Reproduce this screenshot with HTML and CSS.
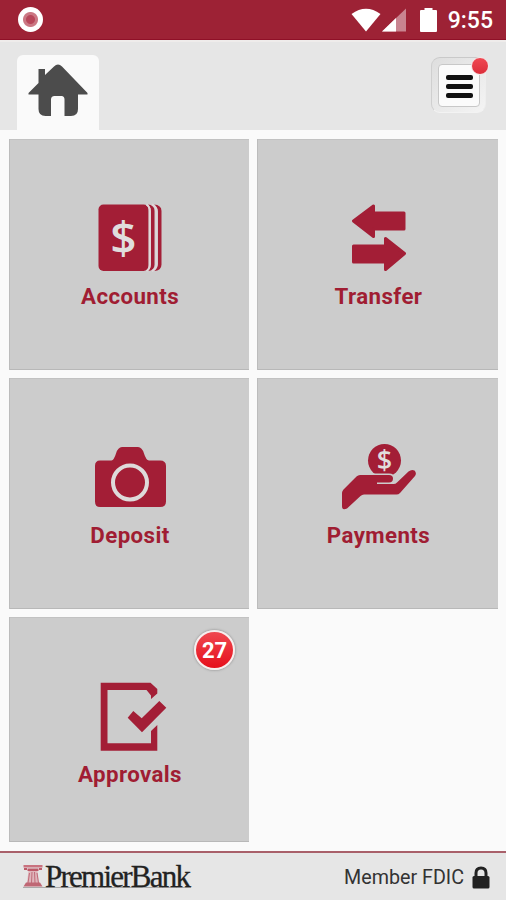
FILE: index.html
```
<!DOCTYPE html>
<html lang="en">
<head>
    <meta charset="UTF-8">
    <meta name="viewport" content="width=device-width, initial-scale=1.0">
    <title>PremierBank Mobile</title>
    <link rel="stylesheet" href="styles.css">
</head>
<body>
    <div class="status-bar">
        <span class="record"></span>
        <div class="status-icons">
            <svg class="wifi" width="30" height="24" viewBox="0 0 30 24"><path d="M.5 6Q15-4.500 29.500 6L15 23.500z" fill="#fff"/></svg>
            <svg class="signal" width="24" height="24" viewBox="0 0 24 24">
                <path d="M0 23.500L24 .5v23z" fill="#c98490"/>
                <path d="M0 23.500L14 10v13.500z" fill="#fff"/>
            </svg>
            <svg class="battery" width="17" height="24" viewBox="0 0 17 24"><path d="M4.500 0h8v2H16q1 0 1 1v20q0 1-1 1H1q-1 0-1-1V3q0-1 1-1h3.500z" fill="#fff"/></svg>
            <span class="time">9:55</span>
        </div>
    </div>

    <header>
        <a class="home-tab">
            <svg width="60" height="54" viewBox="0 0 60 54">
                <path d="M10.500 5H17v6L26 2.500Q30-1.500 34 2.500L59.500 29v1.500H50V45q0 7-7 7h-6.500V35.500Q36.500 32 33.500 32h-7Q23 32 23 35.500V52h-5.500q-7 0-7-7V30.500H.5V29l10-10z" fill="#4c4c4c"/>
            </svg>
        </a>
        <button class="menu-btn">
            <span class="menu-face">
                <span class="bar"></span>
                <span class="bar"></span>
                <span class="bar"></span>
            </span>
            <span class="dot"></span>
        </button>
    </header>

    <main>
        <a class="tile">
            <svg width="80" height="72" viewBox="0 0 80 72">
                <rect x="9.500" y="2.500" width="50" height="66.500" rx="5"/>
                <path d="M59 2.500Q65.500 3 65.500 9V62.500Q65.500 68.500 59 69Q62 66 62 62V9.500Q62 5.500 59 2.500z"/>
                <path d="M65 2.500Q72.500 3 72.500 9V62.500Q72.500 68.500 65 69Q69 66 69 62V9.500Q69 5.500 65 2.500z"/>
                <path class="sheet" d="M57.500 2.500Q60.800 4.500 60.800 9V62.500Q60.800 67 57.500 69M63 2.500Q67.300 4.500 67.300 9V62.500Q67.300 67 63 69"/>
                <text class="dollar" x="34.500" y="52">$</text>
            </svg>
            <span>Accounts</span>
        </a>
        <a class="tile">
            <svg width="80" height="72" viewBox="0 0 80 72">
                <path class="round" d="M15.500 19L35.500 4v7H66v16H35.500v7.500zM66.500 51.500L47.500 36.500V44h-32v16h32v7.500z"/>
            </svg>
            <span>Transfer</span>
        </a>
        <a class="tile">
            <svg width="80" height="72" viewBox="0 0 80 72">
                <path d="M11 19.500h11.500Q25 19 27 12.500Q29 6 33 6H49Q53 6 55 12.500Q57 19 60 19.500H71Q77 19.500 77 25V60.500Q77 66 71 66H11Q6 66 6 60.500V25Q6 19.500 11 19.500z"/>
                <circle cx="41" cy="41.500" r="17" fill="none" stroke="#dedada" stroke-width="4"/>
            </svg>
            <span>Deposit</span>
        </a>
        <a class="tile">
            <svg width="80" height="72" viewBox="0 0 80 72">
                <circle cx="46.500" cy="19.500" r="16.500"/>
                <text class="dollar small" x="46.500" y="29">$</text>
                <path d="M4 52Q4 50 5.500 48.500L18.500 35.500Q20 34 22 34H51Q55 34 55 37.500Q55 41.500 51 41.500H39V43H55.500Q57.500 43 59 41.500L70.500 30.500Q73.500 28 76.500 29.500Q79 32 77 35L62 52Q60.500 53.500 58.500 53.500H26Q24 53.500 22.500 55L9 67.500Q4 70 4 65z" stroke="#ccc" stroke-width="3" paint-order="stroke"/>
            </svg>
            <span>Payments</span>
        </a>
        <a class="tile">
            <svg width="80" height="72" viewBox="0 0 80 72">
                <path d="M11.700 2.700H61.500L68.300 9v4.500L62 19V15.500L57.500 10H18.500V63.300H62V51L68.300 45V70.700H11.700z"/>
                <path d="M38.700 37.700L44.300 31L52.700 38.300L70.300 21L77.300 27.700L53 52.300z"/>
            </svg>
            <span>Approvals</span>
            <b class="badge">27</b>
        </a>
    </main>

    <footer>
        <svg class="brand" width="172" height="30" viewBox="0 0 172 30">
            <!-- column mark -->
            <path d="M.5 3h19v2.500h-19z" fill="#c9727f"/>
            <path d="M1 6h3v2H1zM16 6h3v2h-3zM4.500 6.500h11V9h-11z" fill="#bd5968"/>
            <path d="M5.500 9h9L16 21.500H4z" fill="#dfb5bb"/>
            <path d="M6.500 11L5 21M9 10L8.500 21M11.500 10l.5 11M14 11l1.500 10" stroke="#c06b79" fill="none"/>
            <path d="M3 20.500h14l2.500 4H.5z" fill="#bf6774"/>
            <path d="M0 25.500h168" stroke="#aaa"/>
            <text x="22" y="24.500" textLength="146" lengthAdjust="spacing">PremierBank</text>
        </svg>
        <div class="fdic">
            Member FDIC
            <svg width="18" height="23" viewBox="0 0 18 23">
                <path d="M4 11V7Q4 2 9 2t5 5v4" fill="none" stroke="#222" stroke-width="3"/>
                <rect x=".5" y="10" width="17" height="12.500" rx="1.500" fill="#222"/>
            </svg>
        </div>
    </footer>
</body>
</html>
```
FILE: styles.css
```
* {
    box-sizing: border-box;
}
body {
    margin: 0;
    height: 900px;
    display: flex;
    flex-direction: column;
    background-color: #fafafa;
    font-family: Roboto, sans-serif;
}
.status-bar {
    height: 40px;
    padding: 0 13px 0 18px;
    display: flex;
    align-items: center;
    justify-content: space-between;
    background-color: #9d2235;
    border-bottom: 1px solid #8f1027;
}
.record {
    width: 25px;
    height: 25px;
    border-radius: 50%;
    background: radial-gradient(circle, #b8475a 0 4px, #cb7783 5px 7px, #fff 8px);
}
.status-icons {
    display: flex;
    align-items: center;
    color: #fff;
}
.signal {
    margin-left: 1px;
}
.battery {
    margin-left: 14px;
}
.time {
    margin-left: 11px;
    font-size: 23px;
    font-weight: 500;
    line-height: 24px;
    padding-top: 2px;
}
header {
    height: 90px;
    padding: 0 20px 0 17px;
    display: flex;
    justify-content: space-between;
    background-color: #e6e6e6;
    border-top: 2px solid #efeceb;
}
.home-tab {
    width: 82px;
    height: 75px;
    margin-top: 13px;
    padding: 9px 0 0 11px;
    border-radius: 6px 6px 0 0;
    background-color: #fafafa;
}
.menu-btn {
    position: relative;
    width: 55px;
    height: 56px;
    margin-top: 15px;
    padding: 6px;
    border: 1px solid;
    border-color: #c9c9c9 #eee #f3f3f3 #cfcfcf;
    border-radius: 9px;
    background: linear-gradient(135deg, #dedede, #f4f4f4);
}
.menu-face {
    display: flex;
    flex-direction: column;
    align-items: center;
    justify-content: center;
    gap: 4px;
    width: 42px;
    height: 43px;
    padding-top: 2px;
    border: 1px solid #c8c8c8;
    border-radius: 4px;
    background-color: #fbfbfb;
}
.bar {
    width: 27px;
    height: 4.7px;
    border-radius: 2px;
    background-color: #111;
}
.dot {
    position: absolute;
    top: -1px;
    right: -4px;
    width: 18px;
    height: 18px;
    border: 1px solid #f6e6e6;
    border-radius: 50%;
    background: linear-gradient(#f04852, #dc2e3b);
}
main {
    flex: 1;
    display: grid;
    grid-template-columns: 240px 241px;
    grid-template-rows: 231px 231px 225px;
    gap: 8px;
    padding: 9px 8px 0 9px;
}
.tile {
    position: relative;
    display: flex;
    flex-direction: column;
    align-items: center;
    padding-top: 63px;
    background-color: #ccc;
    box-shadow: inset 1px 0 #bcbcbc, inset 0 1px #c2c2c2, inset 0 -1px #b8b8b8;
    color: #a01d33;
    font-size: 22.3px;
    font-weight: 700;
    line-height: 28px;
    letter-spacing: 0.4px;
}
.tile svg {
    fill: #a31e36;
    margin-bottom: 8px;
}
.tile span {
    padding-left: 2px;
}
.tile .sheet {
    fill: none;
    stroke: #e0d6d8;
    stroke-width: 2;
}
.tile .round {
    stroke: #a31e36;
    stroke-width: 3;
    stroke-linejoin: round;
}
.dollar {
    fill: #e0dddd;
    font-family: "Open Sans", sans-serif;
    font-size: 46px;
    font-weight: 600;
    letter-spacing: 0;
    text-anchor: middle;
}
.dollar.small {
    font-size: 27px;
}
.badge {
    position: absolute;
    top: 13px;
    right: 14px;
    width: 41px;
    height: 40px;
    border: 2px solid #f7eeee;
    border-radius: 50%;
    background: linear-gradient(#ef4850, #e60f1b);
    box-shadow: 0 0 2px 1px #aaa;
    color: #fff;
    font-size: 22px;
    font-weight: 700;
    line-height: 37px;
    letter-spacing: 0;
    text-align: center;
}
footer {
    height: 49px;
    padding: 0 16px 0 23px;
    display: flex;
    align-items: center;
    justify-content: space-between;
    background-color: #e6e6e6;
    border-top: 2px solid #a9606a;
}
.brand {
    margin-top: 1px;
    overflow: visible;
}
.brand text {
    font-family: "Liberation Serif", serif;
    font-size: 31px;
    fill: #222;
    stroke: #222;
    stroke-width: 0.3px;
}
.fdic {
    display: flex;
    align-items: center;
    gap: 8px;
    padding-top: 1px;
    font-size: 19.7px;
    color: #333;
}
```
